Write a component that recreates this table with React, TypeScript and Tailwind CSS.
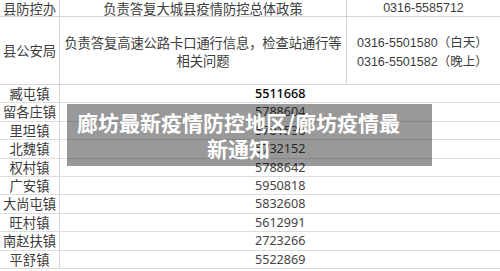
import React from 'react';

const towns: [string, string][] = [
  ['臧屯镇', '5511668'],
  ['留各庄镇', '5788604'],
  ['里坦镇', '5701536'],
  ['北魏镇', '5732152'],
  ['权村镇', '5788642'],
  ['广安镇', '5950818'],
  ['大尚屯镇', '5832608'],
  ['旺村镇', '5612991'],
  ['南赵扶镇', '2723266'],
  ['平舒镇', '5522869'],
];

const cjk = "font-['Noto_Sans_CJK_SC','Noto_Sans',sans-serif]";

export default function App() {
  return (
    <div className={`relative w-[500px] h-[271px] overflow-hidden bg-white text-[#3c3c3c] ${cjk}`}>
      {/* header rows */}
      <div className="flex h-[17px] border-b border-[#d6d6d6] text-[13.3px] leading-[17px]">
        <div className="w-[60px] shrink-0 border-r border-[#d6d6d6] text-center">县防控办</div>
        <div className="w-[287px] shrink-0 border-r border-[#d6d6d6] text-center">负责答复大城县疫情防控总体政策</div>
        <div className="flex-1 text-center font-['Liberation_Sans','Noto_Sans_CJK_SC',sans-serif] text-[12.5px]">0316-5585712</div>
      </div>
      <div className="flex h-[68px] border-b border-[#d6d6d6] text-[13.3px] leading-[18px]">
        <div className="w-[60px] shrink-0 border-r border-[#d6d6d6] flex items-center justify-center">县公安局</div>
        <div className="w-[287px] shrink-0 border-r border-[#d6d6d6] flex flex-col items-center justify-center pt-[3px] tracking-[-0.1px]">
          <span>负责答复高速公路卡口通行信息，检查站通行等</span>
          <span>相关问题</span>
        </div>
        <div className="flex-1 flex flex-col justify-center pl-[10px] pt-[3px] text-[12.5px]">
          <span><span className="font-['Liberation_Sans',sans-serif]">0316-5501580</span>（白天）</span>
          <span><span className="font-['Liberation_Sans',sans-serif]">0316-5501582</span>（晚上）</span>
        </div>
      </div>

      {/* town rows */}
      {towns.map(([name, num], i) => (
        <div key={name} className="flex h-[18.4px] border-b border-[#dcdcdc] leading-[18px]">
          <div className="w-[60px] shrink-0 border-r border-[#d6d6d6] text-center text-[13.3px] whitespace-nowrap">{name}</div>
          <div
            className={`flex-1 pl-[195px] font-['Noto_Sans',sans-serif] text-[12.6px] ${
              i === 0 ? 'text-black font-medium' : 'text-[#444]'
            }`}
          >
            {num}
          </div>
        </div>
      ))}

      {/* title overlay */}
      <div className="absolute left-[67px] top-[104px] w-[365px] h-[62px] bg-black/40 pt-[5px] pl-[6px] pr-[28px] text-center text-white font-bold text-[21px] leading-[26px]">
        廊坊最新疫情防控地区/廊坊疫情最新通知
      </div>
    </div>
  );
}
